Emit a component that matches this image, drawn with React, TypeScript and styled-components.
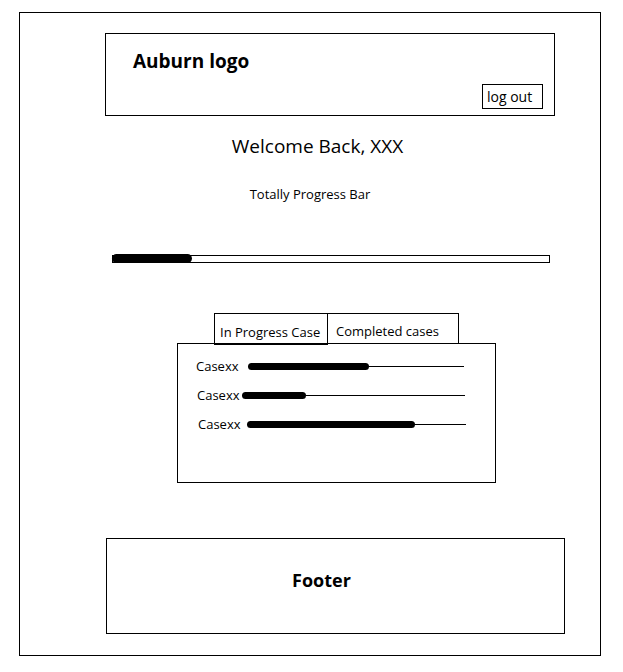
import React from "react";
import styled, { createGlobalStyle } from "styled-components";

const Global = createGlobalStyle`
  * { box-sizing: border-box; }
  html, body { margin: 0; padding: 0; background: #fff; }
  body { font-family: "Open Sans", "Noto Sans", sans-serif; color: #000; }
`;

const Frame = styled.div`
  margin: 12px 0 0 19px;
  width: 582px;
  height: 644px;
  border: 1px solid #000;
  display: flex;
  flex-direction: column;
`;

const Header = styled.header`
  margin: 20px 0 0 85px;
  width: 450px;
  height: 83px;
  border: 1px solid #000;
  padding: 15px 11px 6px 27px;
  display: flex;
  flex-direction: column;
`;

const Logo = styled.div`
  font-size: 19px;
  font-weight: 700;
  line-height: 24px;
`;

const LogoutButton = styled.button`
  margin: auto 0 0 auto;
  width: 61px;
  height: 25px;
  border: 1px solid #000;
  background: #fff;
  padding: 2px 4px;
  font-family: inherit;
  font-size: 14px;
  line-height: 19px;
  text-align: left;
  color: #000;
  border-radius: 0;
`;

const Welcome = styled.h1`
  margin: 17px 0 0 0;
  padding-left: 15px;
  font-size: 19px;
  font-weight: 400;
  line-height: 26px;
  text-align: center;
`;

const Subtitle = styled.div`
  margin-top: 26px;
  font-size: 13px;
  line-height: 18px;
  text-align: center;
`;

const MainTrack = styled.div`
  margin: 52px 0 0 92px;
  width: 438px;
  height: 8px;
  border: 1px solid #000;
  display: flex;
`;

const MainFill = styled.div`
  margin: -2px 0 0 -1px;
  height: 9px;
  background: #000;
  border-radius: 5px;
`;

const CasesArea = styled.section`
  margin: 50px 0 0 157px;
  width: 319px;
  display: flex;
  flex-direction: column;
`;

const TabRow = styled.div`
  display: flex;
  align-items: flex-start;
  padding-left: 37px;
  height: 30px;
`;

const Tab = styled.div<{ $active?: boolean }>`
  font-size: 13px;
  line-height: 18px;
  white-space: nowrap;
  border: 1px solid #000;
  ${(p) =>
    p.$active
      ? `
    width: 114px;
    height: 32px;
    padding: 9px 0 0 5px;
  `
      : `
    width: 131px;
    height: 30px;
    border-left: none;
    border-bottom: none;
    padding: 8px 0 0 8px;
  `}
`;

const Panel = styled.div`
  height: 140px;
  border: 1px solid #000;
  padding-top: 13px;
  display: flex;
  flex-direction: column;
`;

const CaseRow = styled.div<{ $indent: number; $top: number }>`
  display: flex;
  align-items: center;
  height: 18px;
  margin-top: ${(p) => p.$top}px;
  padding-left: ${(p) => p.$indent}px;
`;

const CaseLabel = styled.span<{ $w: number }>`
  flex: 0 0 ${(p) => p.$w}px;
  font-size: 13px;
  line-height: 18px;
  white-space: nowrap;
`;

const CaseBar = styled.div<{ $w: number }>`
  width: ${(p) => p.$w}px;
  display: flex;
  align-items: center;
`;

const CaseFill = styled.div`
  height: 7px;
  background: #000;
  border-radius: 4px;
`;

const CaseRest = styled.div`
  flex: 1;
  height: 1px;
  background: #000;
`;

const Footer = styled.footer`
  margin: 55px 0 0 86px;
  width: 459px;
  height: 96px;
  border: 1px solid #000;
  padding: 29px 28px 0 0;
  font-size: 18px;
  font-weight: 700;
  line-height: 24px;
  text-align: center;
`;

const cases = [
  { indent: 18, labelW: 52, barW: 216, fill: 121, top: 0 },
  { indent: 19, labelW: 45, barW: 223, fill: 64, top: 11 },
  { indent: 20, labelW: 49, barW: 219, fill: 168, top: 11 },
];

export default function App() {
  return (
    <>
      <Global />
      <Frame>
        <Header>
          <Logo>Auburn logo</Logo>
          <LogoutButton>log out</LogoutButton>
        </Header>
        <Welcome>Welcome Back, XXX</Welcome>
        <Subtitle>Totally Progress Bar</Subtitle>
        <MainTrack>
          <MainFill style={{ width: "80px" }} />
        </MainTrack>
        <CasesArea>
          <TabRow>
            <Tab $active>In Progress Case</Tab>
            <Tab>Completed cases</Tab>
          </TabRow>
          <Panel>
            {cases.map((c, i) => (
              <CaseRow key={i} $indent={c.indent} $top={c.top}>
                <CaseLabel $w={c.labelW}>Casexx</CaseLabel>
                <CaseBar $w={c.barW}>
                  <CaseFill style={{ width: `${c.fill}px` }} />
                  <CaseRest />
                </CaseBar>
              </CaseRow>
            ))}
          </Panel>
        </CasesArea>
        <Footer>Footer</Footer>
      </Frame>
    </>
  );
}
